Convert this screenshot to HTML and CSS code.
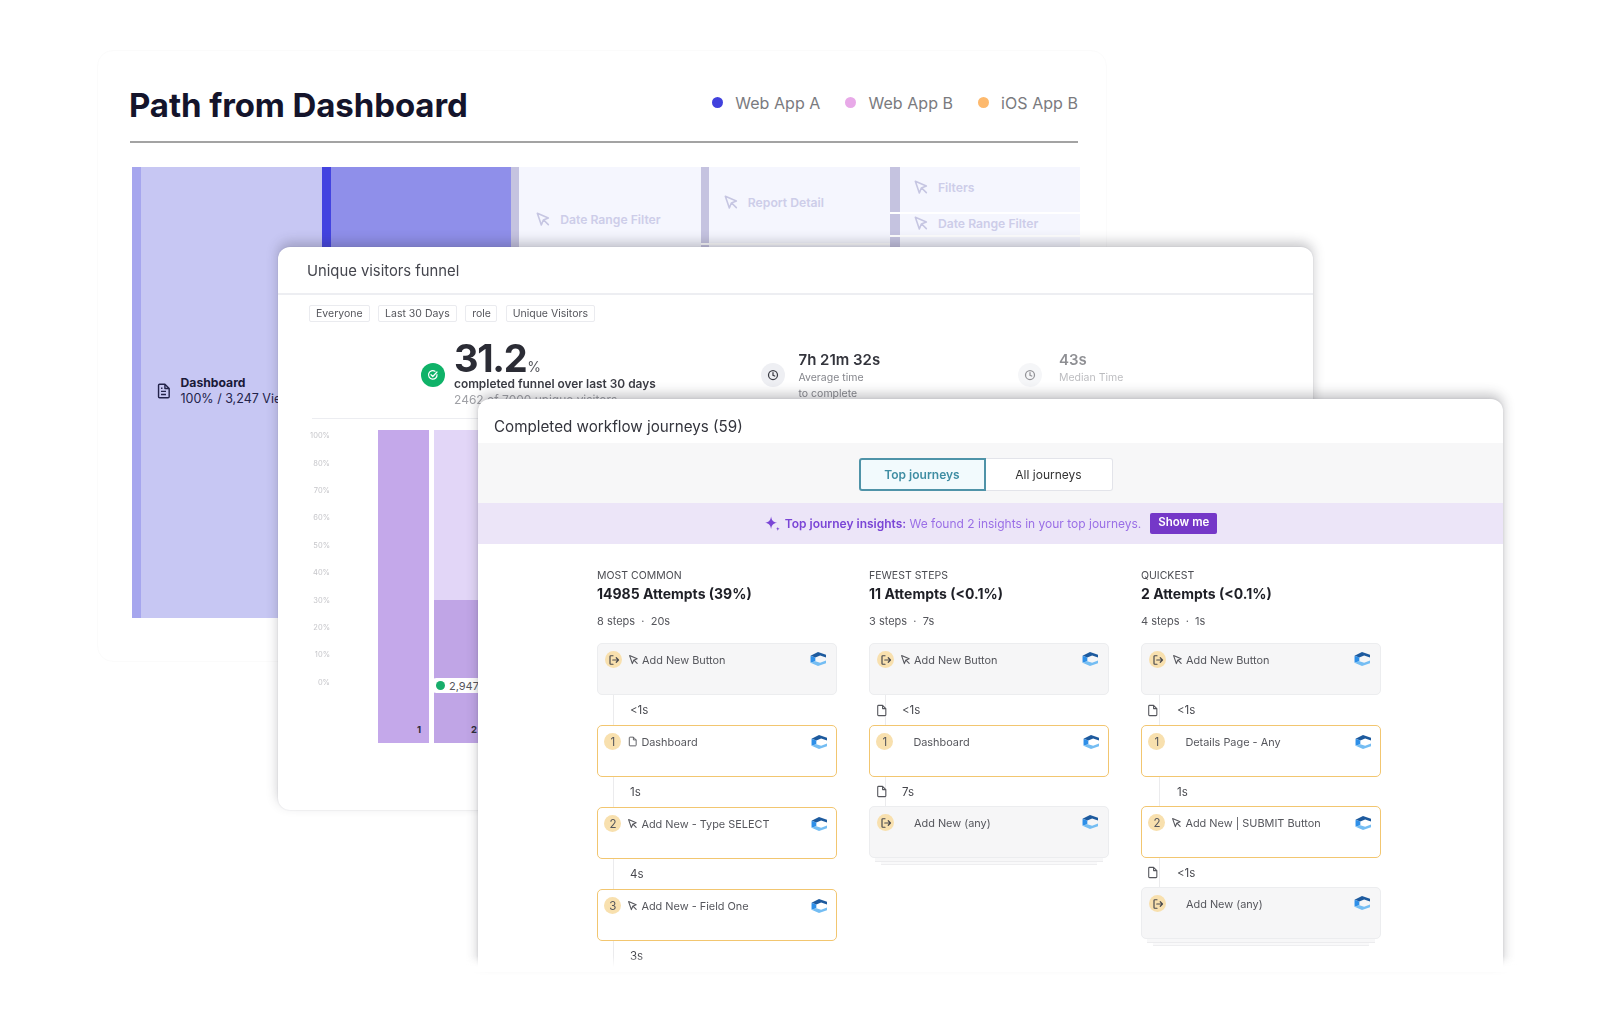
FILE: index.html
```html
<!DOCTYPE html>
<html lang="en">
<head>
<meta charset="utf-8">
<title>Path from Dashboard</title>
<link rel="stylesheet" href="styles.css">
</head>
<body>
<svg class="sprite" aria-hidden="true">
  <symbol id="cursor" viewBox="0 0 24 24"><path d="M3.500 3.500 9.500 21l3-7.500L20 10.500z M13 13.500l7 7" fill="none" stroke="currentColor" stroke-width="2.400" stroke-linejoin="round" stroke-linecap="round"/></symbol>
  <symbol id="page" viewBox="0 0 24 24"><path d="M5 4a1.500 1.500 0 0 1 1.500-1.500H14L20 8.500V20a1.500 1.500 0 0 1-1.500 1.500h-12A1.500 1.500 0 0 1 5 20z M14 2.500v6h6" fill="none" stroke="currentColor" stroke-width="2" stroke-linejoin="round"/></symbol>
  <symbol id="report" viewBox="0 0 24 24"><path d="M5 4a1.500 1.500 0 0 1 1.500-1.500H14L20 8.500V20a1.500 1.500 0 0 1-1.500 1.500h-12A1.500 1.500 0 0 1 5 20z M14 2.500v6h6 M8.500 12.500h7 M8.500 17h7 M8.500 8h2" fill="none" stroke="currentColor" stroke-width="2" stroke-linejoin="round"/></symbol>
  <symbol id="exit" viewBox="0 0 24 24"><path d="M10 3.500H5.500A1.500 1.500 0 0 0 4 5v14a1.500 1.500 0 0 0 1.500 1.500H10 M9.500 12H21 M16.500 7.500 21 12l-4.500 4.500" fill="none" stroke="currentColor" stroke-width="2.400" stroke-linejoin="round" stroke-linecap="round"/></symbol>
  <symbol id="clock" viewBox="0 0 24 24"><circle cx="12" cy="12" r="9" fill="none" stroke="currentColor" stroke-width="2.500"/><path d="M12 7v5.500l3.500 1.500" fill="none" stroke="currentColor" stroke-width="2.500" stroke-linecap="round"/></symbol>
  <symbol id="goal" viewBox="0 0 24 24"><path d="M20 11a8.500 8.500 0 1 1-4-6.400" fill="none" stroke="#fff" stroke-width="2.400" stroke-linecap="round"/><path d="m8 11.500 3.500 3.500L20 6" fill="none" stroke="#fff" stroke-width="2.400" stroke-linecap="round" stroke-linejoin="round"/></symbol>
  <symbol id="spark" viewBox="0 0 24 24"><path d="M10 2c.8 5.500 2.700 7.800 8.500 9-5.800 1.200-7.700 3.500-8.500 9-.8-5.500-2.700-7.800-8.500-9C7.300 9.800 9.200 7.500 10 2z M19.500 16.500c.3 2 1 2.700 3 3-2 .3-2.700 1-3 3-.3-2-1-2.700-3-3 2-.3 2.700-1 3-3z" fill="currentColor"/></symbol>
  <symbol id="brand" viewBox="0 0 15 13">
    <path d="M.5 3.500 7.500 0 15 2.500V5L9.500 3.200 5 5z" fill="#1d5a9e"/>
    <path d="M.5 3.500 5 5v3.500L.5 10z" fill="#2e8fe8"/>
    <path d="M.5 10 5 8.500 9.500 10 15 8v2.500L7.500 13z" fill="#74bdf3"/>
  </symbol>
</svg>

<main class="stage">
  <section class="window window-path">
    <header class="path-head">
      <h1 class="path-title">Path from Dashboard</h1>
      <ul class="legend">
        <li class="legend-item"><span class="dot dot-a"></span>Web App A</li>
        <li class="legend-item"><span class="dot dot-b"></span>Web App B</li>
        <li class="legend-item"><span class="dot dot-c"></span>iOS App B</li>
      </ul>
    </header>
    <div class="sankey">
      <div class="flow flow-1">
        <div class="seg seg-full"><span class="bar"></span>
          <div class="panel panel-origin">
            <svg class="origin-icon"><use href="#report"/></svg>
            <div class="origin-text"><strong>Dashboard</strong><span>100% / 3,247 Views</span></div>
          </div>
        </div>
      </div>
      <div class="flow flow-2">
        <div class="seg seg-full"><span class="bar"></span><div class="panel"></div></div>
      </div>
      <div class="flow flow-3">
        <div class="seg seg-full"><span class="bar"></span>
          <div class="panel"><div class="flow-label label-date"><svg class="cursor-lg"><use href="#cursor"/></svg>Date Range Filter</div></div>
        </div>
      </div>
      <div class="flow flow-4">
        <div class="seg seg-report"><span class="bar"></span>
          <div class="panel"><div class="flow-label label-report"><svg class="cursor-lg"><use href="#cursor"/></svg>Report Detail</div></div>
        </div>
        <div class="seg seg-full"><span class="bar"></span><div class="panel"></div></div>
      </div>
      <div class="flow flow-5">
        <div class="seg seg-filters"><span class="bar"></span>
          <div class="panel"><div class="flow-label label-filters"><svg class="cursor-lg"><use href="#cursor"/></svg>Filters</div></div>
        </div>
        <div class="seg seg-range"><span class="bar"></span>
          <div class="panel"><div class="flow-label label-range"><svg class="cursor-lg"><use href="#cursor"/></svg>Date Range Filter</div></div>
        </div>
        <div class="seg seg-full"><span class="bar"></span><div class="panel"></div></div>
      </div>
    </div>
  </section>

  <section class="window window-funnel">
    <h2 class="funnel-title">Unique visitors funnel</h2>
    <div class="tags">
      <span class="tag">Everyone</span>
      <span class="tag">Last 30 Days</span>
      <span class="tag tag-role">role</span>
      <span class="tag">Unique Visitors</span>
    </div>
    <div class="stats">
      <div class="stat">
        <span class="round round-green"><svg class="goal-icon"><use href="#goal"/></svg></span>
        <div>
          <div class="big">31.2<small>%</small></div>
          <div class="big-sub">completed funnel over last 30 days</div>
          <div class="big-note">2462 of 7000 unique visitors</div>
        </div>
      </div>
      <div class="stat">
        <span class="round round-gray"><svg class="clock-icon"><use href="#clock"/></svg></span>
        <div class="stat-text">
          <div class="stat-value">7h 21m 32s</div>
          <div class="stat-label">Average time<br>to complete</div>
        </div>
      </div>
      <div class="stat stat-faded">
        <span class="round round-gray"><svg class="clock-icon"><use href="#clock"/></svg></span>
        <div class="stat-text stat-text-far">
          <div class="stat-value">43s</div>
          <div class="stat-label">Median Time</div>
        </div>
      </div>
    </div>
    <div class="chart">
      <div class="axis">
        <span>100%</span><span>80%</span><span>70%</span><span>60%</span><span>50%</span>
        <span>40%</span><span>30%</span><span>20%</span><span>10%</span><span>0%</span>
      </div>
      <div class="bars">
        <div class="column"><div class="fill fill-all"><b>1</b></div></div>
        <div class="column column-split">
          <div class="fill fill-drop"></div>
          <div class="fill fill-kept"><b>2</b></div>
          <span class="pill"><i></i>2,947</span>
        </div>
      </div>
    </div>
  </section>

  <section class="window window-journeys">
    <h2 class="journeys-title">Completed workflow journeys (59)</h2>
    <div class="toolbar">
      <div class="tabs">
        <span class="tab tab-on">Top journeys</span>
        <span class="tab">All journeys</span>
      </div>
    </div>
    <div class="insight">
      <svg class="spark"><use href="#spark"/></svg>
      <p class="insight-text"><strong>Top journey insights:</strong> We found 2 insights in your top journeys.</p>
      <span class="show-me">Show me</span>
    </div>
    <div class="journeys">
      <article class="journey">
        <div class="j-kicker">MOST COMMON</div>
        <div class="j-head">14985 Attempts (39%)</div>
        <div class="j-meta">8 steps &nbsp;·&nbsp; 20s</div>
        <div class="step"><span class="badge"><svg class="exit-icon"><use href="#exit"/></svg></span><svg class="mini"><use href="#cursor"/></svg><span class="step-name">Add New Button</span><svg class="brand"><use href="#brand"/></svg></div>
        <div class="wait"><span class="wait-side"></span><span class="wait-time">&lt;1s</span></div>
        <div class="step step-on"><span class="badge">1</span><svg class="mini"><use href="#page"/></svg><span class="step-name">Dashboard</span><svg class="brand"><use href="#brand"/></svg></div>
        <div class="wait"><span class="wait-side"></span><span class="wait-time">1s</span></div>
        <div class="step step-on"><span class="badge">2</span><svg class="mini"><use href="#cursor"/></svg><span class="step-name">Add New - Type SELECT</span><svg class="brand"><use href="#brand"/></svg></div>
        <div class="wait"><span class="wait-side"></span><span class="wait-time">4s</span></div>
        <div class="step step-on"><span class="badge">3</span><svg class="mini"><use href="#cursor"/></svg><span class="step-name">Add New - Field One</span><svg class="brand"><use href="#brand"/></svg></div>
        <div class="wait"><span class="wait-side"></span><span class="wait-time">3s</span></div>
      </article>
      <article class="journey">
        <div class="j-kicker">FEWEST STEPS</div>
        <div class="j-head">11 Attempts (&lt;0.1%)</div>
        <div class="j-meta">3 steps &nbsp;·&nbsp; 7s</div>
        <div class="step"><span class="badge"><svg class="exit-icon"><use href="#exit"/></svg></span><svg class="mini"><use href="#cursor"/></svg><span class="step-name">Add New Button</span><svg class="brand"><use href="#brand"/></svg></div>
        <div class="wait"><span class="wait-side"><svg class="wait-doc"><use href="#page"/></svg></span><span class="wait-time">&lt;1s</span></div>
        <div class="step step-on"><span class="badge">1</span><span class="mini"></span><span class="step-name">Dashboard</span><svg class="brand"><use href="#brand"/></svg></div>
        <div class="wait wait-short"><span class="wait-side"><svg class="wait-doc"><use href="#page"/></svg></span><span class="wait-time">7s</span></div>
        <div class="step step-stack"><span class="badge"><svg class="exit-icon"><use href="#exit"/></svg></span><span class="mini"></span><span class="step-name">Add New (any)</span><svg class="brand"><use href="#brand"/></svg></div>
      </article>
      <article class="journey journey-wide">
        <div class="j-kicker">QUICKEST</div>
        <div class="j-head">2 Attempts (&lt;0.1%)</div>
        <div class="j-meta">4 steps &nbsp;·&nbsp; 1s</div>
        <div class="step"><span class="badge"><svg class="exit-icon"><use href="#exit"/></svg></span><svg class="mini"><use href="#cursor"/></svg><span class="step-name">Add New Button</span><svg class="brand"><use href="#brand"/></svg></div>
        <div class="wait"><span class="wait-side"><svg class="wait-doc"><use href="#page"/></svg></span><span class="wait-time">&lt;1s</span></div>
        <div class="step step-on"><span class="badge">1</span><span class="mini"></span><span class="step-name">Details Page - Any</span><svg class="brand"><use href="#brand"/></svg></div>
        <div class="wait wait-short"><span class="wait-side"></span><span class="wait-time">1s</span></div>
        <div class="step step-on"><span class="badge">2</span><svg class="mini"><use href="#cursor"/></svg><span class="step-name">Add New | SUBMIT Button</span><svg class="brand"><use href="#brand"/></svg></div>
        <div class="wait wait-short"><span class="wait-side"><svg class="wait-doc"><use href="#page"/></svg></span><span class="wait-time">&lt;1s</span></div>
        <div class="step step-stack"><span class="badge"><svg class="exit-icon"><use href="#exit"/></svg></span><span class="mini"></span><span class="step-name">Add New (any)</span><svg class="brand"><use href="#brand"/></svg></div>
      </article>
    </div>
  </section>
  <div class="fade"></div>
</main>
</body>
</html>
```

FILE: styles.css
```css
* { box-sizing: border-box; }
html, body { margin: 0; padding: 0; background: #fff; }
body { width: 1600px; height: 1018px; overflow: hidden; font-family: Inter, "Liberation Sans", sans-serif; color: #333; }
.sprite { position: absolute; width: 0; height: 0; overflow: hidden; }
.stage { position: relative; width: 1600px; height: 1018px; filter: blur(.5px); }
h1, h2, p, ul { margin: 0; padding: 0; }
ul { list-style: none; }

/* Free-canvas windows */
.window { position: absolute; background: #fff; }

.window-path { left: 97px; top: 50px; width: 1010px; height: 612px; padding: 0 28px 0 32px; border: 1px solid #fbfbfb; border-radius: 16px; }
.path-head { display: flex; justify-content: space-between; align-items: center; height: 92px; padding: 24px 0 6px; border-bottom: 2px solid #a3a3a3; }
.path-title { margin-left: -1px; font-size: 33px; line-height: 40px; font-weight: 700; color: #14142b; letter-spacing: -.1px; }
.legend { display: flex; gap: 25px; margin-top: -5px; }
.legend-item { display: flex; align-items: center; gap: 12px; font-size: 16px; line-height: 20px; letter-spacing: .05px; color: #7a7a7e; }
.dot { width: 11px; height: 11px; border-radius: 50%; }
.dot-a { background: #4141dd; }
.dot-b { background: #e8a9e8; }
.dot-c { background: #fdb96d; }

.sankey { display: flex; width: 948px; height: 451px; margin: 24px 0 0 2px; }
.flow { display: flex; flex-direction: column; gap: 2px; width: 189.600px; overflow: hidden; }
.seg { display: flex; }
.seg-full { flex: 1; }
.seg-report { height: 76px; }
.seg-filters { height: 45px; }
.seg-range { height: 21px; }
.bar { flex: none; width: 8px; background: #c5c3e0; }
.panel { flex: 1; background: #f5f6fe; }
.flow-5 .bar { width: 9.500px; }
.flow-1 .bar { background: #a6a6ee; width: 8.500px; }
.flow-1 .panel { background: #c7c7f3; }
.flow-2 .bar { background: #4343e0; width: 9px; }
.flow-2 .panel { background: #8f8fea; }
.flow-label { display: flex; align-items: center; gap: 9px; height: 18px; padding-left: 16px; font-size: 12.200px; font-weight: 600; color: #cdcde9; white-space: nowrap; }
.cursor-lg { width: 16px; height: 16px; color: #c6c6e2; }
.label-date { margin-top: 43px; }
.label-report { margin-top: 26px; padding-left: 14px; }
.label-filters { margin-top: 11px; padding-left: 13px; }
.label-range { margin-top: 0; padding-left: 13px; }
.panel-origin { display: flex; align-items: flex-start; gap: 9px; padding: 208px 0 0 14px; white-space: nowrap; }
.origin-icon { width: 17px; height: 18px; margin-top: 7px; color: #23234a; }
.origin-text { display: flex; flex-direction: column; font-size: 12.500px; line-height: 16px; color: #23234a; }
.origin-text strong { font-size: 12.200px; font-weight: 700; color: #1a1a38; }

.window-funnel { left: 278px; top: 247px; width: 1035px; height: 563px; border-radius: 12px; box-shadow: 0 -5px 12px rgba(50,50,60,.26), 0 0 2px rgba(60,60,90,.12); }
.funnel-title { height: 46px; margin: 0; padding-left: 29px; font-size: 14.800px; line-height: 48px; font-weight: 400; color: #44454d; }
.tags { display: flex; gap: 8.500px; padding: 10px 0 0 31px; border-top: 2px solid #edeef2; }
.tag { height: 17px; padding: 0 6px; border: 1px solid #eaebef; border-radius: 2px; font-size: 10.500px; line-height: 15px; color: #55565c; white-space: nowrap; }
.tag-role { width: 32px; text-align: center; }

.stats { display: grid; grid-template-columns: 339.500px 257.500px 1fr; padding: 19px 0 0 143px; height: 96px; }
.stat { display: flex; align-items: flex-start; gap: 9px; }
.round { flex: none; display: flex; align-items: center; justify-content: center; width: 24px; height: 24px; margin-top: 22px; border-radius: 50%; }
.round-green { background: #0fb268; }
.round-gray { background: #eeeff3; color: #3b3c44; }
.goal-icon { width: 12px; height: 12px; }
.clock-icon { width: 12px; height: 12px; }
.big { font-size: 38px; line-height: 34px; font-weight: 700; color: #2b2c35; letter-spacing: -1.300px; white-space: nowrap; }
.big small { margin-left: 1px; font-size: 14px; line-height: 0; font-weight: 400; letter-spacing: 0; color: #55565c; }
.big-sub { margin-top: 1px; font-size: 11.900px; line-height: 16px; font-weight: 600; color: #3b3c44; white-space: nowrap; }
.big-note { font-size: 12px; line-height: 16px; color: #a0a1a6; white-space: nowrap; }
.stat-text { padding: 10px 0 0 5px; }
.stat-text-far { padding-left: 8px; }
.stat-value { font-size: 15px; line-height: 18px; font-weight: 600; color: #33343c; white-space: nowrap; }
.stat-label { margin-top: 1px; font-size: 10.500px; line-height: 16px; color: #85868c; white-space: nowrap; }
.stat-faded { opacity: .55; }

.chart { display: flex; margin-left: 34px; border-top: 1px solid #ecedf1; }
.axis { display: flex; flex-direction: column; width: 18px; padding-top: 3px; }
.axis span { display: flex; align-items: center; justify-content: flex-end; height: 27.400px; font-size: 7.500px; color: #c6c6ca; white-space: nowrap; }
.bars { display: flex; gap: 5px; height: 313px; margin: 11px 0 0 48px; }
.column { position: relative; display: flex; flex-direction: column; width: 51px; }
.fill { display: flex; align-items: flex-end; justify-content: flex-end; padding: 0 8px 8px 0; font-size: 9.500px; color: #2d2d3a; }
.fill b { font-weight: 700; }
.fill-all { flex: 1; background: #c4a8ea; }
.fill-drop { height: 170px; background: #e2d6f7; }
.fill-kept { flex: 1; background: #c0a5e6; }
.pill { position: absolute; left: -5px; top: 248px; display: flex; align-items: center; gap: 4px; width: 60px; height: 15px; padding-left: 7px; border-radius: 8px; background: #fff; font-size: 11px; color: #55565c; }
.pill i { width: 9px; height: 9px; border-radius: 50%; background: #18ad6b; }

.window-journeys { left: 478px; top: 399px; width: 1025px; height: 569px; border-radius: 12px 12px 0 0; overflow: hidden; box-shadow: 0 -5px 12px rgba(50,50,60,.28), 0 0 3px rgba(60,60,70,.12); }
.journeys-title { height: 44px; padding-left: 16px; font-size: 15.200px; line-height: 55px; font-weight: 400; color: #33343c; white-space: nowrap; }
.toolbar { display: flex; justify-content: center; height: 60px; padding: 15px 10px 0 0; background: #f7f7f8; }
.tabs { display: flex; height: 33px; }
.tab { width: 127px; border: 1.500px solid #e3e4ea; border-left: 0; border-radius: 0 3px 3px 0; background: #fff; font-size: 12px; line-height: 31px; text-align: center; color: #333; }
.tab-on { border: 2px solid #4f93a8; border-radius: 3px 0 0 3px; background: #f2fafd; font-weight: 600; line-height: 29px; color: #3f8da3; }
.insight { display: flex; align-items: center; justify-content: center; height: 41px; background: #ece5f8; color: #9a6fe6; }
.spark { width: 17px; height: 17px; margin-right: 4px; color: #7a45d6; }
.insight-text { font-size: 12px; white-space: nowrap; }
.insight-text strong { font-weight: 600; color: #7a45d6; }
.show-me { margin-left: 9px; width: 67px; height: 21px; border-radius: 2px; background: #7538c8; font-size: 11.500px; line-height: 19px; font-weight: 600; text-align: center; color: #fff; }

.journeys { display: grid; grid-template-columns: repeat(3, 240px); column-gap: 32px; padding: 25px 0 0 119px; }
.j-kicker { font-size: 10.500px; line-height: 14px; color: #4b4c52; white-space: nowrap; }
.j-head { margin-top: 1px; font-size: 14px; line-height: 20px; font-weight: 700; color: #1e1f26; white-space: nowrap; }
.j-meta { margin: 10px 0 15px; font-size: 11px; line-height: 14px; color: #55565c; white-space: pre-wrap; }
.step { display: flex; align-items: flex-start; height: 52px; padding: 7px 10px 0 7px; border: 1px solid #ecedef; border-radius: 5px; background: #f6f6f7; }
.step-on { padding: 7px 9.400px 0 6.400px; border: 1.600px solid #f2c670; background: #fff; }
.step-stack { box-shadow: 0 9px 0 -6px #f7f7f8, 0 10px 0 -6px #ececee, 0 18px 0 -12px #f9f9fa, 0 19px 0 -12px #eeeef0; }
.badge { flex: none; display: flex; align-items: center; justify-content: center; width: 17px; height: 17px; border-radius: 50%; background: #f8e0ae; font-size: 11.500px; color: #55565c; }
.exit-icon { width: 12px; height: 12px; color: #4a4a4e; }
.mini { flex: none; width: 11px; height: 11px; margin: 3px 3.500px 0 5.500px; color: #55565c; }
.step-name { flex: 1; margin-top: 1px; font-size: 10.900px; line-height: 17px; color: #55565c; white-space: nowrap; }
.brand { flex: none; width: 16px; height: 14px; margin-top: 1px; }
.step-on .brand { margin-top: 1.500px; }
.wait { display: flex; align-items: stretch; height: 30px; }
.wait-short { height: 29px; }
.wait-side { display: flex; align-items: center; justify-content: flex-start; width: 17px; padding-left: 6px; border-right: 1.500px solid #ebebed; }
.wait-doc { flex: none; width: 13px; height: 13px; color: #55565c; margin-left: 0; }
.wait-time { align-self: center; padding-left: 16px; font-size: 11.500px; color: #45464c; }
.journey-wide .wait-side { width: 19px; padding-left: 5px; }
.journey-wide .wait-time { padding-left: 17px; }
.fade { position: absolute; left: 465px; top: 956px; width: 1052px; height: 16px; background: linear-gradient(rgba(255,255,255,0), #fff 70%); }
```
